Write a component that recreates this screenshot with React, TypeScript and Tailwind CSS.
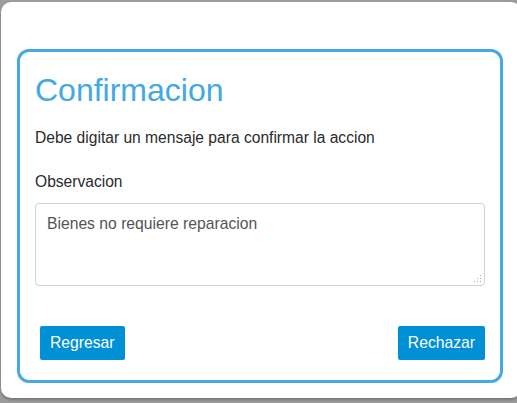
import * as React from "react"

export default function App() {
    return (
        <div
            className="h-[403px] w-[517px] overflow-hidden bg-[#9c9c9c] pt-[2px] pl-[1px]"
            style={{ fontFamily: '"Liberation Sans", Arial, sans-serif' }}
        >
            <div className="h-[396px] w-[520px] rounded-[10px] bg-white pt-[47px] pl-[16px] pr-[18px] shadow-[0_2px_3px_rgba(0,0,0,0.25)]">
                <div className="h-[334px] rounded-[12px] border-[3px] border-[#43abe2] px-[15px] pt-[20px]">
                    <h3 className="text-[32px] leading-[36px] text-[#42a9e1]">Confirmacion</h3>
                    <p className="mt-[18px] text-[15.6px] leading-[24px] text-[#2b2b2b]">
                        Debe digitar un mensaje para confirmar la accion
                    </p>
                    <label className="mt-[20px] block text-[15.6px] leading-[24px] text-[#2b2b2b]">Observacion</label>
                    <div className="relative mt-[9px]">
                        <textarea
                            className="block h-[83px] w-full resize-none rounded-[4px] border border-[#d0d0d0] px-[11px] pt-[8px] text-[15.7px] leading-[24px] text-[#555] outline-none"
                            defaultValue="Bienes no requiere reparacion"
                        />
                        <svg className="absolute right-[3px] bottom-[3px]" width="8" height="8" viewBox="0 0 8 8">
                            <g fill="#a8a8a8">
                                <rect x="6" y="0" width="1" height="1" />
                                <rect x="6" y="3" width="1" height="1" />
                                <rect x="6" y="6" width="1" height="1" />
                                <rect x="3" y="3" width="1" height="1" />
                                <rect x="3" y="6" width="1" height="1" />
                                <rect x="0" y="6" width="1" height="1" />
                            </g>
                        </svg>
                    </div>
                    <div className="mt-[40px] flex items-center justify-between pl-[5px]">
                        <button className="h-[34px] rounded-[2px] bg-[#0090d6] px-[10px] text-[15.7px] text-white">
                            Regresar
                        </button>
                        <button className="h-[34px] rounded-[2px] bg-[#0090d6] px-[10px] text-[15.7px] text-white">
                            Rechazar
                        </button>
                    </div>
                </div>
            </div>
        </div>
    )
}
